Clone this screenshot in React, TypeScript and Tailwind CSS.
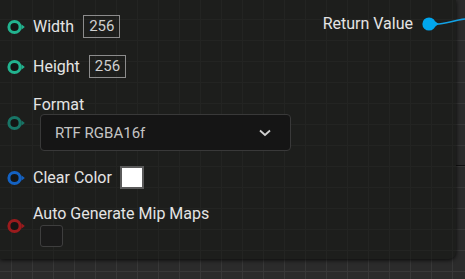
import React from 'react';

const font = { fontFamily: 'Roboto, "Liberation Sans", sans-serif' };

function Pin({ color, core = '#141514' }: { color: string; core?: string }) {
  return (
    <svg width="20" height="16" viewBox="0 0 20 16" className="shrink-0">
      <circle cx="7.5" cy="8" r="5.6" fill={core} stroke={color} strokeWidth="3" />
      <polygon points="14.4,5.3 17.8,8 14.4,10.7" fill={color} />
    </svg>
  );
}

function ValueBox({ value }: { value: string }) {
  return (
    <div className="h-[23px] px-[5px] flex items-center border border-[#8c8c8c] text-[15px] text-[#cfcfcf] leading-none">
      {value}
    </div>
  );
}

export default function App() {
  return (
    <div
      className="relative w-[465px] h-[279px] overflow-hidden bg-[#2b2b2b] [background-image:linear-gradient(to_right,#383838_1px,transparent_1px),linear-gradient(to_bottom,#383838_1px,transparent_1px)] [background-size:21px_21px] [background-position:11px_19px]"
      style={font}
    >
      {/* major grid line on the canvas */}
      <div className="absolute left-0 right-0 top-[165px] h-px bg-[#111111]" />

      {/* node body */}
      <div className="relative w-[456px] h-[259px] rounded-br-[7px] bg-[#1d1e1c] shadow-[0_1px_4px_rgba(0,0,0,0.8)] [background-image:linear-gradient(to_right,#232422_1px,transparent_1px),linear-gradient(to_bottom,#232422_1px,transparent_1px)] [background-size:21px_21px] [background-position:11px_19px] pl-[7px] pt-[15px] text-[16px] leading-[18px] text-[#e4e4e4]">
        <div className="flex justify-between">
          <div className="flex flex-col gap-[17px]">
            <div className="flex items-center h-[23px]">
              <Pin color="#22b38f" />
              <span className="ml-[6px] mr-[9px]">Width</span>
              <ValueBox value="256" />
            </div>
            <div className="flex items-center h-[23px]">
              <Pin color="#22b38f" />
              <span className="ml-[6px] mr-[9px]">Height</span>
              <ValueBox value="256" />
            </div>
          </div>
          <div className="flex items-center h-[23px] pr-[16px] -mt-[3px]">
            <span className="mr-[9px]">Return Value</span>
            <svg width="18" height="16" viewBox="0 0 18 16">
              <circle cx="7" cy="8" r="6.6" fill="#00a6ee" />
              <polygon points="13,5.3 16.6,8 13,10.7" fill="#00a6ee" />
            </svg>
          </div>
        </div>

        <div className="flex items-center mt-[16px]">
          <Pin color="#187566" />
          <div className="ml-[6px] flex flex-col">
            <span className="mt-[2px]">Format</span>
            <div className="ml-[7px] w-[251px] h-[37px] rounded-[4px] bg-[#151515] border border-[#393939] flex items-center justify-between pl-[14px] pr-[18px] text-[15px] text-[#c4c4c4]">
              <span>RTF RGBA16f</span>
              <svg width="14" height="10" viewBox="0 0 14 10">
                <path d="M2 2.5 L7 7 L12 2.5" fill="none" stroke="#d0d0d0" strokeWidth="1.8" />
              </svg>
            </div>
          </div>
        </div>

        <div className="flex items-center h-[23px] mt-[15px]">
          <Pin color="#1462c2" />
          <span className="ml-[6px] mr-[8px]">Clear Color</span>
          <div className="w-[24px] h-[23px] bg-white border-2 border-[#5a5a5a]" />
        </div>

        <div className="flex items-center mt-[16px]">
          <Pin color="#9a1b1d" />
          <div className="ml-[6px] flex flex-col">
            <span>Auto Generate Mip Maps</span>
            <div className="ml-[7px] mt-[2px] w-[23px] h-[22px] rounded-[3px] bg-[#1a1a1a] border border-[#3e3e3e]" />
          </div>
        </div>
      </div>

      {/* wire leaving the return pin */}
      <svg className="absolute left-[436px] top-[14px]" width="30" height="14" viewBox="0 0 30 14">
        <path d="M0 10 C10 10 18 6 30 5" fill="none" stroke="#12a2e6" strokeWidth="1.5" />
      </svg>
    </div>
  );
}
